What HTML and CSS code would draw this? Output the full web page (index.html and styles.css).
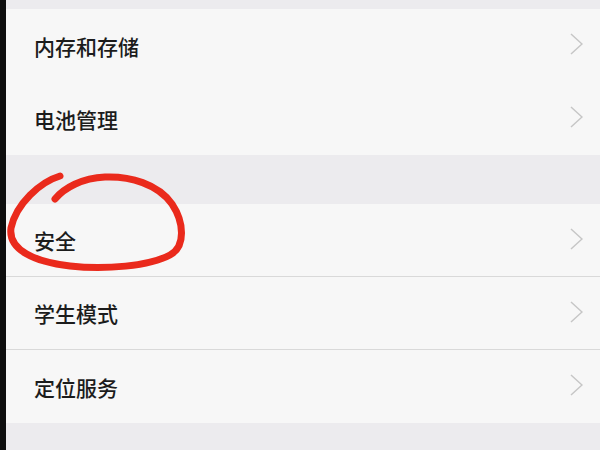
FILE: index.html
```html
<!DOCTYPE html>
<html lang="zh-CN">
<head>
    <meta charset="UTF-8">
    <meta name="viewport" content="width=device-width, initial-scale=1.0">
    <title>设置</title>
    <link rel="stylesheet" href="styles.css">
</head>
<body>
    <div class="screen">
        <div class="edge"></div>
        <div class="settings">
            <div class="group">
                <div class="row"><span>内存和存储</span><svg class="chev" viewBox="0 0 13 22"><path d="M1 1 L12 11 L1 21"/></svg></div>
                <div class="row"><span>电池管理</span><svg class="chev" viewBox="0 0 13 22"><path d="M1 1 L12 11 L1 21"/></svg></div>
            </div>
            <div class="group">
                <div class="row line"><span>安全</span><svg class="chev" viewBox="0 0 13 22"><path d="M1 1 L12 11 L1 21"/></svg></div>
                <div class="row line"><span>学生模式</span><svg class="chev" viewBox="0 0 13 22"><path d="M1 1 L12 11 L1 21"/></svg></div>
                <div class="row"><span>定位服务</span><svg class="chev" viewBox="0 0 13 22"><path d="M1 1 L12 11 L1 21"/></svg></div>
            </div>
        </div>
        <!-- hand drawn mark around 安全 -->
        <svg class="mark" viewBox="0 0 600 450">
            <path d="M60 176 C40 182 16 204 11 228 C8 250 35 262 70 266 C105 270 150 266 170 255 C186 246 184 222 172 204 C158 184 130 176 105 177 C82 178 64 188 55 199"/>
        </svg>
    </div>
</body>
</html>
```

FILE: styles.css
```css
body {
    margin: 0;
    background: #ecebee;
    font-family: "Noto Sans CJK SC", "Noto Sans", sans-serif;
}
.screen {
    display: flex;
    height: 450px;
    overflow: hidden;
    position: relative;
}
.edge {
    width: 6px;
    background: #0e0e0e;
    flex-shrink: 0;
}
.settings {
    flex: 1;
    padding-top: 9px;
}
.group {
    background: #f7f7f7;
    margin-bottom: 49px;
}
.row {
    height: 73px;
    display: flex;
    align-items: center;
    justify-content: space-between;
    padding: 0 17px 0 28px;
    box-sizing: border-box;
    font-size: 21px;
    font-weight: 500;
    color: #1c1c1c;
}
.row span {
    margin-top: 0;
}
.line {
    border-bottom: 1px solid #d9d9d9;
}
.chev {
    width: 13px;
    height: 22px;
    margin-top: -3px;
}
.chev path {
    fill: none;
    stroke: #c6c6c6;
    stroke-width: 1.5;
}
.mark {
    position: absolute;
    left: 0;
    top: 0;
    width: 600px;
    height: 450px;
    pointer-events: none;
}
.mark path {
    fill: none;
    stroke: #ea2a1c;
    stroke-width: 7;
    stroke-linecap: round;
    stroke-linejoin: round;
}
```
